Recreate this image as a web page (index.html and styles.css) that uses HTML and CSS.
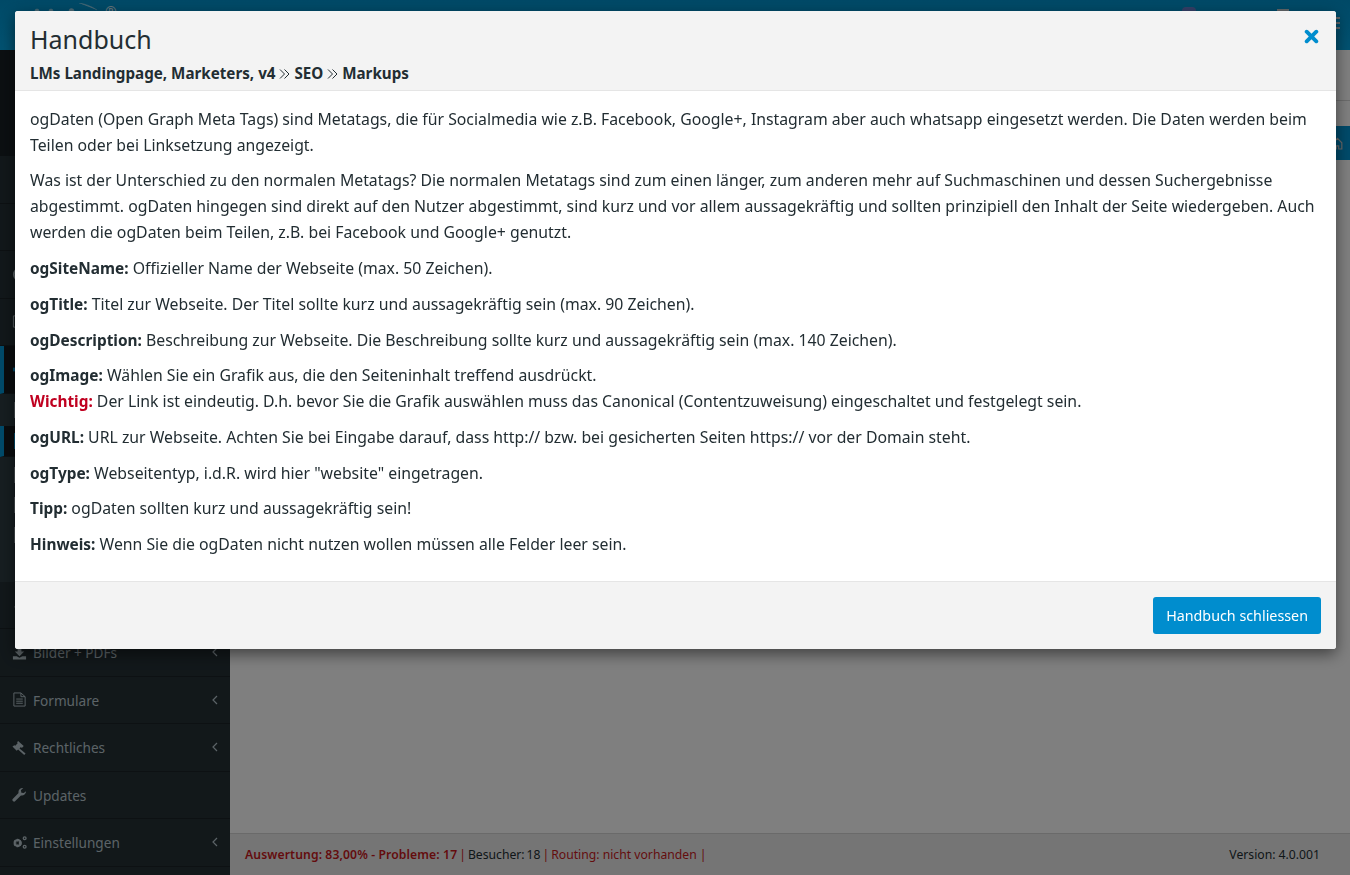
FILE: index.html
```html
<!DOCTYPE html>
<html lang="de">
<head>
    <meta charset="UTF-8">
    <title>Handbuch</title>
    <link rel="stylesheet" href="styles.css">
</head>
<body>
    <div class="app">
        <header class="topbar">
            <div class="logo">
                <svg class="logo-mark" viewBox="0 0 70 10"><path d="M2 8a2 2 0 0 1 4 0zM16 8a2 2 0 0 1 4 0zM36 8a2.500 2.500 0 0 1 5 0zM46 0c6 1 12 3 18 7" fill="#fff" stroke="#fff" stroke-width=".6"/></svg>
                <span class="logo-reg">&#174;</span>
            </div>
            <div class="top-right">
                <span class="avatar"></span>
                <span class="top-icon"></span>
                <svg class="top-menu" viewBox="0 0 4 14"><path d="M0 1h4M0 6h4M0 11h4" stroke="currentColor" stroke-width="2"/></svg>
            </div>
        </header>
        <div class="main">
            <aside class="sidebar">
                <div class="side-top"></div>
                <div class="nav-item">
                    <svg class="nav-icon" viewBox="0 0 16 16"><circle cx="14" cy="8" r="2" fill="currentColor"/></svg>
                </div>
                <div class="nav-item">
                    <svg class="nav-icon" viewBox="0 0 16 16"><path d="M13 5h3v6h-3z" fill="currentColor"/></svg>
                </div>
                <div class="nav-item">
                    <svg class="nav-icon" viewBox="0 0 16 16"><circle cx="8" cy="8" r="6" fill="none" stroke="currentColor" stroke-width="2"/></svg>
                </div>
                <div class="nav-item">
                    <svg class="nav-icon" viewBox="0 0 16 16"><path d="M1.500 2h13v12h-13z" fill="none" stroke="currentColor"/></svg>
                </div>
                <div class="nav-item active">
                    <svg class="nav-icon" viewBox="0 0 16 16"><path d="M1 6h15v4H1z" fill="#0095d4"/></svg>
                </div>
                <div class="nav-sub">
                    <span class="sub-mark"></span>
                </div>
                <div class="nav-item active short">
                    <span class="sub-mark blue"></span>
                </div>
                <div class="nav-sub tall">
                    <span class="sub-mark"></span>
                    <span class="sub-mark"></span>
                    <span class="sub-mark"></span>
                </div>
                <div class="nav-item">
                    <svg class="nav-icon" viewBox="0 0 16 16"><path d="M2 11l4-4 5 1v3z" fill="currentColor"/></svg>
                </div>
                <div class="nav-item">
                    <svg class="nav-icon" viewBox="0 0 16 16"><path d="M6 1h4v6h3l-5 5-5-5h3zM1 12h4l3 1.500 3-1.500h4v3.500H1z" fill="currentColor"/></svg>
                    <span class="nav-label">Bilder + PDFs</span>
                    <svg class="chev" viewBox="0 0 6 10"><path d="M5 1L1 5l4 4" fill="none" stroke="currentColor" stroke-width="1.200"/></svg>
                </div>
                <div class="nav-item">
                    <svg class="nav-icon" viewBox="0 0 14 16"><path d="M1 1h7.500L13 5v10H1zM8.500 1v4H13M3.500 7.500h7M3.500 9.800h7M3.500 12h7" fill="none" stroke="currentColor"/></svg>
                    <span class="nav-label">Formulare</span>
                    <svg class="chev" viewBox="0 0 6 10"><path d="M5 1L1 5l4 4" fill="none" stroke="currentColor" stroke-width="1.200"/></svg>
                </div>
                <div class="nav-item">
                    <svg class="nav-icon" viewBox="0 0 16 16"><path d="M6.500 1l6 5.500-2 2-1-1L8 9l6.500 5.500-1.500 1.500L6.500 10 5 11.500 0.500 7l2-1.500 1 .5L6 3.500 5.500 2.500z" fill="currentColor"/></svg>
                    <span class="nav-label">Rechtliches</span>
                    <svg class="chev" viewBox="0 0 6 10"><path d="M5 1L1 5l4 4" fill="none" stroke="currentColor" stroke-width="1.200"/></svg>
                </div>
                <div class="nav-item">
                    <svg class="nav-icon" viewBox="0 0 16 16"><path d="M15 4.500A4.500 4.500 0 0 1 9.500 9L3.500 15a1.600 1.600 0 0 1-2.500-2.500L7 6.500A4.500 4.500 0 0 1 12 1L9.500 3.500 10 6l2.500.5z" fill="currentColor"/></svg>
                    <span class="nav-label">Updates</span>
                </div>
                <div class="nav-item">
                    <svg class="nav-icon" viewBox="0 0 16 16"><circle cx="6" cy="8.500" r="3" fill="none" stroke="currentColor" stroke-width="3" stroke-dasharray="2.400 .8"/><circle cx="6" cy="8.500" r="3.200" fill="none" stroke="currentColor" stroke-width="1.800"/><circle cx="13.500" cy="3.500" r="1.500" fill="none" stroke="currentColor" stroke-width="1.400"/><circle cx="13.500" cy="12.500" r="1.500" fill="none" stroke="currentColor" stroke-width="1.400"/></svg>
                    <span class="nav-label">Einstellungen</span>
                    <svg class="chev" viewBox="0 0 6 10"><path d="M5 1L1 5l4 4" fill="none" stroke="currentColor" stroke-width="1.200"/></svg>
                </div>
            </aside>
            <div class="content">
                <div class="content-head"></div>
                <div class="content-tools">
                    <svg class="tool-icon" viewBox="0 0 14 16"><path d="M1.500 15V7L7 1.500 12.500 7v8h-4v-4h-3v4z" fill="none" stroke="currentColor" stroke-width="1.500"/></svg>
                </div>
                <div class="content-body"></div>
                <footer class="status">
                    <div>
                        <span class="bad">Auswertung: 83,00% - Probleme: 17</span> <span class="sep">|</span>
                        Besucher: 18 <span class="sep">|</span>
                        <span class="warn">Routing: nicht vorhanden |</span>
                    </div>
                    <div class="version">Version: 4.0.001</div>
                </footer>
            </div>
        </div>
    </div>

    <div class="backdrop"></div>

    <div class="modal">
        <div class="modal-header">
            <h3 class="modal-title">Handbuch</h3>
            <p class="modal-path">LMs Landingpage, Marketers, v4
                <svg class="path-sep" viewBox="0 0 11 10"><path d="M1 .5L5.500 5 1 9.500M5.500 .5L10 5 5.500 9.500" fill="none" stroke="currentColor"/></svg>
                SEO
                <svg class="path-sep" viewBox="0 0 11 10"><path d="M1 .5L5.500 5 1 9.500M5.500 .5L10 5 5.500 9.500" fill="none" stroke="currentColor"/></svg>
                Markups</p>
            <svg class="modal-close" viewBox="0 0 14 14"><path d="M2.500 2.500l9 9M11.500 2.500l-9 9" fill="none" stroke="currentColor" stroke-width="3.600" stroke-linecap="round"/></svg>
        </div>
        <div class="modal-body">
            <p>ogDaten (Open Graph Meta Tags) sind Metatags, die für Socialmedia wie z.B. Facebook, Google+, Instagram aber auch whatsapp eingesetzt werden. Die Daten werden beim Teilen oder bei Linksetzung angezeigt.</p>
            <p>Was ist der Unterschied zu den normalen Metatags? Die normalen Metatags sind zum einen länger, zum anderen mehr auf Suchmaschinen und dessen Suchergebnisse abgestimmt. ogDaten hingegen sind direkt auf den Nutzer abgestimmt, sind kurz und vor allem aussagekräftig und sollten prinzipiell den Inhalt der Seite wiedergeben. Auch werden die ogDaten beim Teilen, z.B. bei Facebook und Google+ genutzt.</p>
            <p><b>ogSiteName:</b> Offizieller Name der Webseite (max. 50 Zeichen).</p>
            <p><b>ogTitle:</b> Titel zur Webseite. Der Titel sollte kurz und aussagekräftig sein (max. 90 Zeichen).</p>
            <p><b>ogDescription:</b> Beschreibung zur Webseite. Die Beschreibung sollte kurz und aussagekräftig sein (max. 140 Zeichen).</p>
            <p><b>ogImage:</b> Wählen Sie ein Grafik aus, die den Seiteninhalt treffend ausdrückt.<br><b class="important">Wichtig:</b> Der Link ist eindeutig. D.h. bevor Sie die Grafik auswählen muss das Canonical (Contentzuweisung) eingeschaltet und festgelegt sein.</p>
            <p><b>ogURL:</b> URL zur Webseite. Achten Sie bei Eingabe darauf, dass http:// bzw. bei gesicherten Seiten https:// vor der Domain steht.</p>
            <p><b>ogType:</b> Webseitentyp, i.d.R. wird hier "website" eingetragen.</p>
            <p><b>Tipp:</b> ogDaten sollten kurz und aussagekräftig sein!</p>
            <p><b>Hinweis:</b> Wenn Sie die ogDaten nicht nutzen wollen müssen alle Felder leer sein.</p>
        </div>
        <div class="modal-footer">
            <button class="close-btn">Handbuch schliessen</button>
        </div>
    </div>
</body>
</html>
```

FILE: styles.css
```css
* {
    box-sizing: border-box;
}
body {
    margin: 0;
    height: 875px;
    overflow: hidden;
    font-family: "Noto Sans", sans-serif;
    font-size: 15.800px;
    color: #222d32;
    background-color: #fff;
}
.app {
    display: flex;
    flex-direction: column;
    height: 875px;
}
.topbar {
    height: 50px;
    flex: none;
    display: flex;
    justify-content: space-between;
    background: linear-gradient(to bottom, #0093ce, #04a4e2);
    color: #fff;
}
.logo {
    display: flex;
    align-items: flex-start;
    gap: 2px;
    padding: 2px 0 0 33px;
    font-size: 14px;
    line-height: 20px;
}
.logo-mark {
    width: 70px;
    height: 10px;
    margin-top: 1px;
    opacity: 0.6;
}
.logo-reg {
    opacity: 0.8;
}
.top-right {
    display: flex;
    align-items: flex-start;
    gap: 47px;
    padding: 7px 10px 0 0;
}
.avatar {
    width: 14px;
    height: 14px;
    margin-right: 34px;
    border-radius: 4px;
    background-color: #6a7fd0;
}
.top-icon {
    width: 12px;
    height: 8px;
    margin-top: 2px;
    background-color: #c8d0d4;
}
.top-menu {
    width: 4px;
    height: 14px;
    margin-top: 10px;
    color: #c8d0d4;
}
.main {
    flex: 1;
    display: flex;
    min-height: 0;
}
.sidebar {
    width: 230px;
    flex: none;
    display: flex;
    flex-direction: column;
    background-color: #243035;
    color: #b8c7ce;
}
.side-top {
    height: 106px;
    flex: none;
    background-color: #171f24;
}
.nav-item {
    height: 47.500px;
    flex: none;
    display: flex;
    align-items: center;
    gap: 6px;
    padding: 0 12px;
    border-bottom: 1px solid #1a2226;
    font-size: 13.600px;
}
.nav-item.active {
    padding-left: 8px;
    border-left: 4px solid #0095d4;
    background-color: #14191d;
}
.nav-item.short {
    height: 31px;
}
.nav-sub {
    height: 32px;
    flex: none;
    display: flex;
    flex-direction: column;
    gap: 14px;
    padding: 8px 0 0 14px;
    background-color: #2d3c42;
}
.nav-sub.tall {
    height: 125px;
    padding-top: 10px;
}
.sub-mark {
    width: 2px;
    height: 16px;
    flex: none;
    background-color: #8d999f;
}
.sub-mark.blue {
    margin-left: 2px;
    background-color: #0095d4;
}
.nav-icon {
    width: 15px;
    height: 15px;
    flex: none;
}
.nav-label {
    flex: 1;
    padding-top: 1px;
}
.chev {
    width: 6px;
    height: 10px;
    flex: none;
}
.content {
    flex: 1;
    display: flex;
    flex-direction: column;
}
.content-head {
    height: 51px;
    flex: none;
    border-bottom: 1px solid #d8d8d8;
}
.content-tools {
    height: 34px;
    flex: none;
    display: flex;
    justify-content: flex-end;
    align-items: center;
    margin-top: 25px;
    background-color: #0095d4;
    color: #cfcfcf;
}
.tool-icon {
    width: 11px;
    height: 15px;
    margin-right: 7px;
}
.content-body {
    flex: 1;
}
.status {
    height: 42px;
    flex: none;
    display: flex;
    justify-content: space-between;
    align-items: center;
    padding: 0 30px 0 15px;
    border-top: 1px solid #d4d4d4;
    background-color: #ebebeb;
    font-size: 12.200px;
    word-spacing: -1.200px;
}
.version {
    word-spacing: 0;
}
.bad {
    color: #c8191c;
    font-weight: 600;
    letter-spacing: 0.100px;
    word-spacing: 0;
}
.sep {
    color: #c8191c;
}
.warn {
    color: #c8191c;
    word-spacing: 0;
}
.backdrop {
    position: fixed;
    inset: 0;
    background-color: rgba(0, 0, 0, 0.5);
}
.modal {
    position: fixed;
    left: 15px;
    top: 11px;
    width: 1321px;
    height: 638px;
    display: flex;
    flex-direction: column;
    border-radius: 3px;
    background-color: #fff;
    box-shadow: 0 5px 15px rgba(0, 0, 0, 0.5);
}
.modal-header {
    position: relative;
    height: 80px;
    flex: none;
    padding: 12px 15px 0;
    border-bottom: 1px solid #e5e5e5;
    border-radius: 3px 3px 0 0;
    background-color: #f3f3f3;
}
.modal-title {
    margin: 0;
    font-size: 25px;
    line-height: 33px;
    font-weight: 400;
}
.modal-path {
    margin: 6px 0 0;
    font-size: 15.200px;
    line-height: 22px;
    font-weight: 700;
}
.path-sep {
    width: 11px;
    height: 10px;
}
.modal-close {
    position: absolute;
    right: 17px;
    top: 18px;
    width: 15px;
    height: 15px;
    color: #008dce;
}
.modal-body {
    flex: 1;
    min-height: 0;
    padding: 14.800px 15px 0;
    line-height: 26px;
}
.modal-body p {
    margin: 0 0 9.700px;
}
.modal-body b {
    font-size: 15.400px;
    line-height: 1;
}
.important {
    color: #c00020;
}
.modal-footer {
    height: 68px;
    flex: none;
    display: flex;
    justify-content: flex-end;
    align-items: center;
    padding: 0 15px;
    border-top: 1px solid #e5e5e5;
    border-radius: 0 0 3px 3px;
    background-color: #f3f3f3;
}
.close-btn {
    height: 37px;
    padding: 0 13px;
    border: none;
    border-radius: 3px;
    font-family: inherit;
    font-size: 14.300px;
    color: #fff;
    background-color: #008dce;
}
```
